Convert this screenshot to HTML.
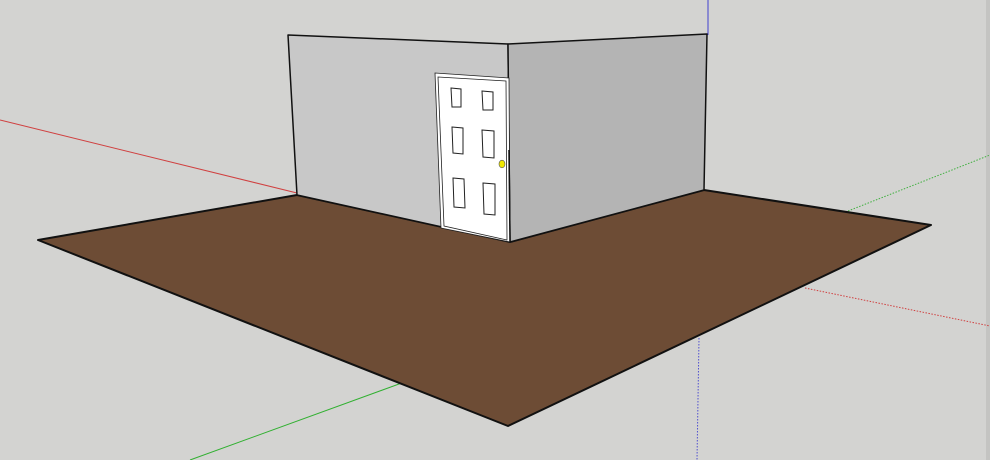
<!DOCTYPE html>
<html><head><meta charset="utf-8"><style>
html,body{margin:0;padding:0;background:#d3d3d1;overflow:hidden}
svg{display:block}
</style></head><body>
<svg width="990" height="460" viewBox="0 0 990 460" xmlns="http://www.w3.org/2000/svg">
<rect width="990" height="460" fill="#d3d3d1"/>
<rect x="986" y="0" width="4" height="460" fill="#c4c4c2"/>
<!-- axes -->
<line x1="0" y1="120" x2="297" y2="193" stroke="#d04040" stroke-width="1"/>
<line x1="708" y1="0" x2="708" y2="35" stroke="#4040d0" stroke-width="1"/>
<line x1="848" y1="211" x2="990" y2="155" stroke="#40b040" stroke-width="1" stroke-dasharray="1.5,1.5"/>
<line x1="805" y1="288" x2="990" y2="326" stroke="#d04040" stroke-width="1" stroke-dasharray="1.5,1.5"/>
<line x1="699" y1="338" x2="697" y2="460" stroke="#5050d0" stroke-width="1" stroke-dasharray="1.5,1.5"/>
<line x1="190" y1="460" x2="410" y2="380" stroke="#30b030" stroke-width="1"/>
<!-- floor -->
<polygon points="38,240 297,195 510,242 704,190 931,225 508,426" fill="#6d4c35" stroke="#111" stroke-width="2" stroke-linejoin="round"/>
<!-- walls -->
<polygon points="288,35 508,44 510,242 297,195" fill="#c8c8c8" stroke="#111" stroke-width="1.5" stroke-linejoin="round"/>
<polygon points="508,44 707,34 704,190 510,242" fill="#b4b4b4" stroke="#111" stroke-width="1.5" stroke-linejoin="round"/>
<!-- door -->
<polygon points="435,73 509,78 510,242 441,228" fill="#fff" stroke="#222" stroke-width="0.8"/>
<polygon points="438,77 506,81 507,240 444,226" fill="#fff" stroke="#222" stroke-width="0.8"/>
<line x1="509" y1="150" x2="510" y2="242" stroke="#111" stroke-width="1.5"/>
<g fill="none" stroke="#222" stroke-width="1">
<polygon points="451,88 461,89 461,107 452,107"/>
<polygon points="482,91 493,92 493,110 483,110"/>
<polygon points="452,127 463,128 463,154 453,153"/>
<polygon points="482,130 494,131 494,158 483,157"/>
<polygon points="453,178 464,179 465,208 454,207"/>
<polygon points="483,183 495,184 495,215 484,214"/>
</g>
<ellipse cx="502" cy="164" rx="3" ry="3.8" fill="#f0e800" stroke="#555" stroke-width="0.6"/>
</svg>
</body></html>
